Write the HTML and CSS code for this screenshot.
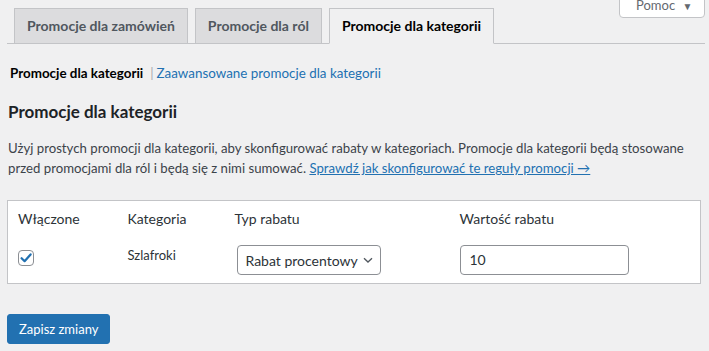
FILE: index.html
```html
<!DOCTYPE html>
<html lang="pl">
<head>
  <meta charset="UTF-8" />
  <title>Promocje dla kategorii</title>
  <link rel="stylesheet" href="styles.css">
</head>
<body>
  <div class="help-link">Pomoc <span class="arrow">▼</span></div>

  <div class="wrap">
    <nav class="tabs">
      <a class="tab">Promocje dla zamówień</a>
      <a class="tab">Promocje dla ról</a>
      <a class="tab active">Promocje dla kategorii</a>
    </nav>

    <ul class="subnav">
      <li class="current">Promocje dla kategorii</li>
      <li class="sep">|</li>
      <li><a href="#">Zaawansowane promocje dla kategorii</a></li>
    </ul>

    <h2>Promocje dla kategorii</h2>

    <p class="intro">
      Użyj prostych promocji dla kategorii, aby skonfigurować rabaty w kategoriach. Promocje dla kategorii będą stosowane
      przed promocjami dla ról i będą się z nimi sumować. <a href="#">Sprawdź jak skonfigurować te reguły promocji →</a>
    </p>

    <table class="rules">
      <thead>
        <tr>
          <th class="col-on">Włączone</th>
          <th class="col-cat">Kategoria</th>
          <th class="col-type">Typ rabatu</th>
          <th>Wartość rabatu</th>
        </tr>
      </thead>
      <tbody>
        <tr>
          <td>
            <span class="checkbox">
              <svg viewBox="0 0 16 16" width="16" height="16"><path d="M3.6 8.2 L6.6 11.2 L12.6 4.4" fill="none" stroke="#2271b1" stroke-width="2.2" stroke-linecap="round" stroke-linejoin="round"/></svg>
            </span>
          </td>
          <td class="cat-name">Szlafroki</td>
          <td>
            <div class="select">
              <span>Rabat procentowy</span>
              <svg viewBox="0 0 12 12" width="12" height="12"><path d="M2 4.2 L6 8 L10 4.2" fill="none" stroke="#50575e" stroke-width="1.3"/></svg>
            </div>
          </td>
          <td><div class="input">10</div></td>
        </tr>
      </tbody>
    </table>

    <button class="btn-primary">Zapisz zmiany</button>
  </div>
</body>
</html>
```

FILE: styles.css
```css
* {
  box-sizing: border-box;
}
body {
  background: #f0f0f1;
  color: #3c434a;
  font-family: 'Lato', 'Liberation Sans', sans-serif;
  font-size: 13.2px;
  margin: 0;
  position: relative;
}
a {
  color: #2271b1;
}
.help-link {
  position: absolute;
  top: -9px;
  right: 4px;
  width: 86px;
  height: 27px;
  background: #fff;
  border: 1px solid #c3c4c7;
  border-radius: 0 0 4px 4px;
  color: #646970;
  font-size: 13px;
  line-height: 26px;
  padding-left: 16px;
}
.help-link .arrow {
  font-size: 10px;
  margin-left: 4px;
}
.wrap {
  padding: 0 8px 0 7px;
}
.tabs {
  display: flex;
  padding-top: 8px;
  border-bottom: 1px solid #c3c4c7;
  margin-right: -4px;
}
.tab {
  margin-left: 7px;
  margin-bottom: -1px;
  padding: 5px 12px;
  line-height: 24px;
  font-size: 14px;
  font-weight: 700;
  color: #50575e;
  background: #dcdcde;
  border: 1px solid #c3c4c7;
  text-decoration: none;
}
.tab.active {
  background: #f0f0f1;
  color: #000;
  border-bottom-color: #f0f0f1;
}
.subnav {
  list-style: none;
  display: flex;
  margin: 16px 0 0;
  padding: 0 0 0 3px;
  line-height: 26px;
  font-size: 13.4px;
}
.subnav .current {
  color: #000;
  font-weight: 700;
}
.subnav .sep {
  color: #a7aaad;
  margin: 0 3px 0 7px;
}
.subnav a {
  text-decoration: none;
}
h2 {
  margin: 14px 0 0 1px;
  font-size: 17px;
  line-height: 24px;
  font-weight: 700;
  color: #1d2327;
}
.intro {
  margin: 14px 0 0 1px;
  line-height: 20px;
}
.rules {
  margin-top: 22px;
  width: 694px;
  border-collapse: collapse;
  background: #fff;
  border: 1px solid #c3c4c7;
  table-layout: fixed;
}
.rules th {
  text-align: left;
  font-weight: 400;
  font-size: 14px;
  color: #2c3338;
  padding: 8px 10px;
  line-height: 19px;
}
.rules td {
  padding: 9px 10px 8px;
  vertical-align: top;
  font-size: 13px;
  color: #2c3338;
}
.col-on {
  width: 110px;
}
.col-cat {
  width: 107px;
}
.col-type {
  width: 225px;
}
.cat-name {
  line-height: 20px;
}
.checkbox {
  display: block;
  width: 16px;
  height: 16px;
  margin-top: 5px;
  border: 1px solid #8c8f94;
  border-radius: 4px;
  background: #fff;
}
.checkbox svg {
  display: block;
  margin: -1px 0 0 -1px;
}
.select {
  display: flex;
  align-items: center;
  justify-content: space-between;
  width: 144px;
  height: 30px;
  margin-left: 2px;
  padding: 0 6px 0 8px;
  border: 1px solid #8c8f94;
  border-radius: 4px;
  background: #fff;
  font-size: 14px;
  color: #2c3338;
}
.input {
  width: 169px;
  height: 30px;
  padding: 0 9px;
  line-height: 28px;
  border: 1px solid #8c8f94;
  border-radius: 4px;
  background: #fff;
  font-size: 14px;
  color: #2c3338;
}
.btn-primary {
  display: block;
  margin-top: 30px;
  height: 30px;
  padding: 0 11px;
  background: #2271b1;
  border: 1px solid #2271b1;
  border-radius: 3px;
  color: #fff;
  font-family: inherit;
  font-size: 13px;
}
```
